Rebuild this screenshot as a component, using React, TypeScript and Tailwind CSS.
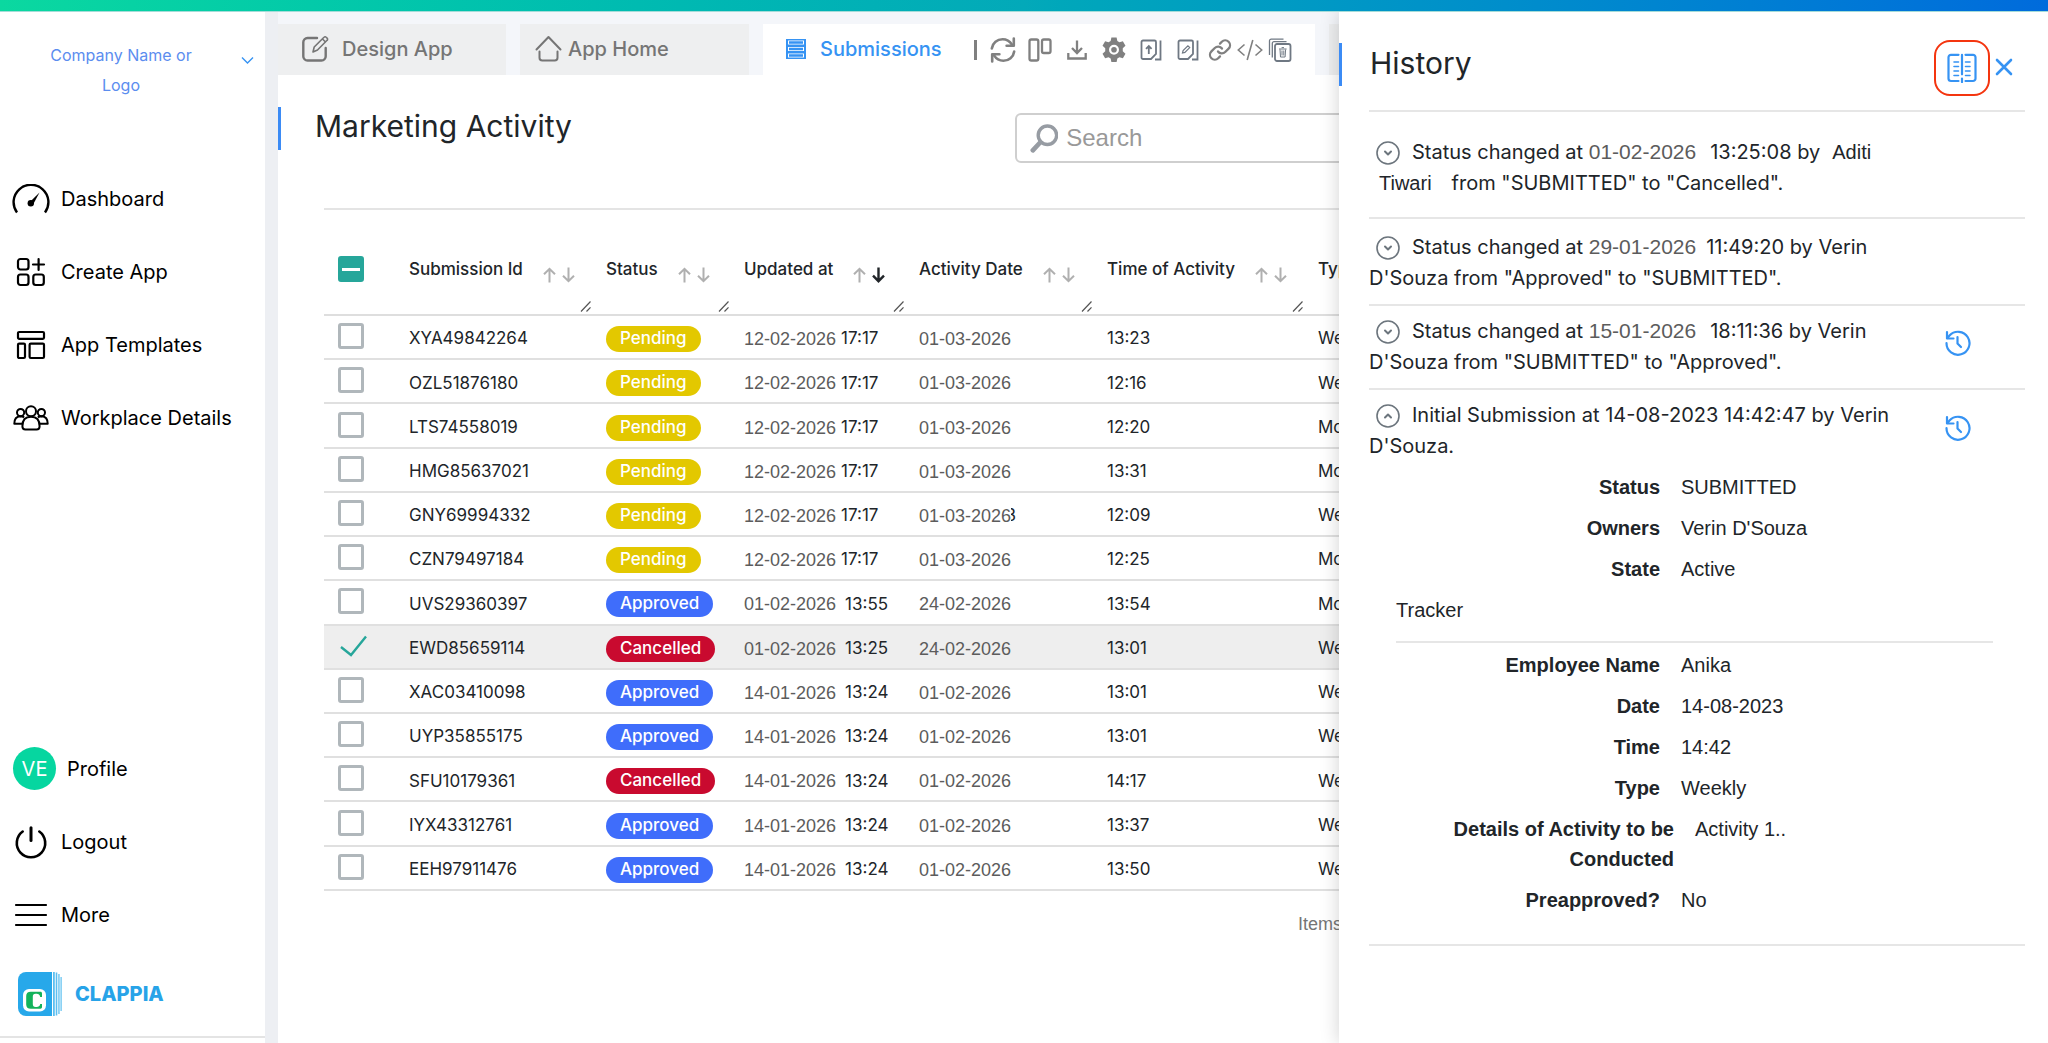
import React from 'react';

type Status = 'Pending' | 'Approved' | 'Cancelled';

interface Submission {
  id: string;
  status: Status;
  date: string;
  time: string;
  activityDate: string;
  activityTime: string;
  type: string;
  selected?: boolean;
  clipped?: string;
}

const submissions: Submission[] = [
  { id: 'XYA49842264', status: 'Pending', date: '12-02-2026', time: '17:17', activityDate: '01-03-2026', activityTime: '13:23', type: 'Weekly' },
  { id: 'OZL51876180', status: 'Pending', date: '12-02-2026', time: '17:17', activityDate: '01-03-2026', activityTime: '12:16', type: 'Weekly' },
  { id: 'LTS74558019', status: 'Pending', date: '12-02-2026', time: '17:17', activityDate: '01-03-2026', activityTime: '12:20', type: 'Monthly' },
  { id: 'HMG85637021', status: 'Pending', date: '12-02-2026', time: '17:17', activityDate: '01-03-2026', activityTime: '13:31', type: 'Monthly' },
  { id: 'GNY69994332', status: 'Pending', date: '12-02-2026', time: '17:17', activityDate: '01-03-2026', activityTime: '12:09', type: 'Weekly', clipped: '3' },
  { id: 'CZN79497184', status: 'Pending', date: '12-02-2026', time: '17:17', activityDate: '01-03-2026', activityTime: '12:25', type: 'Monthly' },
  { id: 'UVS29360397', status: 'Approved', date: '01-02-2026', time: '13:55', activityDate: '24-02-2026', activityTime: '13:54', type: 'Monthly' },
  { id: 'EWD85659114', status: 'Cancelled', date: '01-02-2026', time: '13:25', activityDate: '24-02-2026', activityTime: '13:01', type: 'Weekly', selected: true },
  { id: 'XAC03410098', status: 'Approved', date: '14-01-2026', time: '13:24', activityDate: '01-02-2026', activityTime: '13:01', type: 'Weekly' },
  { id: 'UYP35855175', status: 'Approved', date: '14-01-2026', time: '13:24', activityDate: '01-02-2026', activityTime: '13:01', type: 'Weekly' },
  { id: 'SFU10179361', status: 'Cancelled', date: '14-01-2026', time: '13:24', activityDate: '01-02-2026', activityTime: '14:17', type: 'Weekly' },
  { id: 'IYX43312761', status: 'Approved', date: '14-01-2026', time: '13:24', activityDate: '01-02-2026', activityTime: '13:37', type: 'Weekly' },
  { id: 'EEH97911476', status: 'Approved', date: '14-01-2026', time: '13:24', activityDate: '01-02-2026', activityTime: '13:50', type: 'Weekly' },
];

const badgeColors: Record<Status, string> = {
  Pending: 'bg-[#e3c800]',
  Approved: 'bg-[#3f6dfb]',
  Cancelled: 'bg-[#c90a2f]',
};

const columns = [
  { label: 'Submission Id', width: 'w-[197px]' },
  { label: 'Status', width: 'w-[138px]' },
  { label: 'Updated at', width: 'w-[175px]', sorted: true },
  { label: 'Activity Date', width: 'w-[188px]' },
  { label: 'Time of Activity', width: 'w-[211px]' },
  { label: 'Type', width: '' },
];

/* ---------- Sidebar ---------- */

const DashboardIcon = () => (
  <svg width="38" height="30" viewBox="0 0 38 30" fill="none">
    <path d="M5 28.5A17.4 17.4 0 1 1 33 28.5" stroke="#000" strokeWidth="2.4" />
    <path d="M27.5 8.5L20.8 21l-3.4-2.6z" fill="#000" />
    <circle cx="18.8" cy="19.3" r="3.2" fill="#000" />
  </svg>
);

const CreateIcon = () => (
  <svg width="30" height="30" viewBox="0 0 30 30" fill="none" stroke="#000" strokeWidth="2.2" strokeLinecap="round">
    <rect x="2" y="2" width="10.5" height="10.5" rx="2.4" />
    <rect x="2" y="17.5" width="10.5" height="10.5" rx="2.4" />
    <rect x="17.3" y="17.5" width="10.5" height="10.5" rx="2.4" />
    <path d="M22.6 2v11M17 7.5h11" />
  </svg>
);

const TemplatesIcon = () => (
  <svg width="30" height="30" viewBox="0 0 30 30" fill="none" stroke="#000" strokeWidth="2.2">
    <rect x="2" y="2" width="26" height="6.8" rx="1.2" />
    <rect x="2" y="13.6" width="7" height="14.4" rx="1.2" />
    <rect x="13.6" y="13.6" width="14.4" height="14.4" rx="1.2" />
  </svg>
);

const PeopleIcon = () => (
  <svg width="36" height="26" viewBox="0 0 36 26" fill="none" stroke="#000" strokeWidth="2" strokeLinejoin="round">
    <circle cx="18" cy="6.3" r="5" />
    <circle cx="7.6" cy="7.6" r="3.6" />
    <circle cx="28.4" cy="7.6" r="3.6" />
    <path d="M9.4 21.2c0-6 3.2-9.4 8.6-9.4s8.6 3.4 8.6 9.4c0 2-1 3.2-3 3.2H12.4c-2 0-3-1.2-3-3.2z" />
    <path d="M9.2 18.8H1.3c0-4.4 2-7.4 6-7.6 1.6 0 2.8.4 3.8 1.2M26.8 18.8h7.9c0-4.4-2-7.4-6-7.6-1.6 0-2.8.4-3.8 1.2" />
  </svg>
);

const PowerIcon = () => (
  <svg width="34" height="34" viewBox="0 0 34 34" fill="none" stroke="#000" strokeWidth="2.6" strokeLinecap="round">
    <path d="M17 2.8v12.6" strokeWidth="3" />
    <path d="M8.7 6.5a14.2 14.2 0 1 0 16.6 0" />
  </svg>
);

const MoreIcon = () => (
  <svg width="34" height="24" viewBox="0 0 34 24" fill="none" stroke="#000" strokeWidth="2.2" strokeLinecap="round">
    <path d="M2 2h30M2 12h30M2 22h30" />
  </svg>
);

const ClappiaLogo = () => (
  <svg width="44" height="44" viewBox="0 0 44 44">
    <path d="M8 0h26v44H8a8 8 0 0 1-8-8V8a8 8 0 0 1 8-8z" fill="#27a8ea" />
    <path d="M35 .1h1.8v43.8H35zM37.7.6h1.6v42.8h-1.6zM40.3 2h1.3v40h-1.3zM42.5 5h1.2v34h-1.2z" fill="#5cbff0" />
    <rect x="5" y="17" width="23" height="22.5" rx="6" fill="#fff" />
    <path
      d="M24 25v-3.6c0-1-.6-1.600-1.600-1.600h-9.600c-3 0-4.600 1.500-4.600 4.300v8.300c0 2.800 1.600 4.300 4.600 4.300h9.600c1 0 1.600-.6 1.600-1.600V32h-1.800c-.4 2.200-1.600 3-3.600 3h-1c-2 0-2.800-.9-2.800-3v-7.200c0-2.100.8-3 2.800-3h1c2 0 3.200.9 3.600 3.200z"
      fill="#13b35b"
    />
  </svg>
);

const NavItem: React.FC<{ icon: React.ReactNode; label: string }> = ({ icon, label }) => (
  <li>
    <a href="#" className="flex h-[73px] items-center gap-[11px] pl-3 text-xl text-black">
      <span className="flex w-[38px] justify-center">{icon}</span>
      {label}
    </a>
  </li>
);

const Sidebar = () => (
  <aside className="flex w-[265px] shrink-0 flex-col bg-white">
    <button className="flex items-start pt-7 text-left">
      <span className="ml-[42px] w-[158px] text-center text-base leading-[30px] text-[#5b8def]">Company Name or Logo</span>
      <svg className="mt-4 ml-[41px]" width="13" height="9" viewBox="0 0 13 9" fill="none" stroke="#3693f3" strokeWidth="1.4">
        <path d="M1 1.5l5.5 5.5L12 1.5" />
      </svg>
    </button>
    <nav className="mt-[62px]">
      <ul>
        <NavItem icon={<DashboardIcon />} label="Dashboard" />
        <NavItem icon={<CreateIcon />} label="Create App" />
        <NavItem icon={<TemplatesIcon />} label="App Templates" />
        <NavItem icon={<PeopleIcon />} label="Workplace Details" />
      </ul>
    </nav>
    <ul className="mt-auto">
      <li>
        <a href="#" className="flex h-[73px] items-center gap-[11px] pl-[13px] text-xl text-black">
          <span className="flex size-[43px] items-center justify-center rounded-full bg-[#06d6a0] text-white">VE</span>
          Profile
        </a>
      </li>
      <NavItem icon={<PowerIcon />} label="Logout" />
      <NavItem icon={<MoreIcon />} label="More" />
    </ul>
    <a href="#" className="flex h-[85px] items-center gap-[13px] pl-[18px] text-xl font-extrabold text-[#27a3e8]">
      <ClappiaLogo />
      CLAPPIA
    </a>
    <div className="h-[7px] border-t-2 border-[#e4e4e4]" />
  </aside>
);

/* ---------- Tabs and toolbar ---------- */

const ToolButton: React.FC<{ label: string; children: React.ReactNode }> = ({ label, children }) => (
  <button aria-label={label} className="flex h-7 w-6 items-center justify-center text-[#808080]">
    {children}
  </button>
);

const Toolbar = () => (
  <div className="flex items-center">
    <div className="mr-[14px] h-5 w-[3px] bg-[#808080]" />
    <div className="flex gap-[13px]">
      <ToolButton label="Refresh">
        <svg width="26" height="26" viewBox="0 0 26 26" fill="none" stroke="currentColor" strokeWidth="2.6" strokeLinejoin="round" strokeLinecap="round" className="shrink-0">
          <path d="M1.8 11.5C2.6 5.8 7.2 2.2 12.6 2.2c4 0 7.2 2 9.4 5.4M24.2 14.5c-.8 5.7-5.4 9.3-10.8 9.3-4 0-7.2-2-9.4-5.4" />
          <path d="M23.8 1.5v7.2h-7.2M2.2 24.5v-7.2h7.2" />
        </svg>
      </ToolButton>
      <ToolButton label="Columns">
        <svg width="24" height="24" viewBox="0 0 24 24" fill="none" stroke="currentColor" strokeWidth="2.3">
          <rect x="1.500" y="1.500" width="8.800" height="21" rx="1.800" />
          <rect x="14" y="1.500" width="8.500" height="13.500" rx="1.800" />
        </svg>
      </ToolButton>
      <ToolButton label="Download">
        <svg width="20" height="20" viewBox="0 0 20 20" fill="none" stroke="currentColor" strokeWidth="2.3">
          <path d="M10 .5v12M5 8l5 5 5-5M1.3 13v5.5h17.4V13" />
        </svg>
      </ToolButton>
      <ToolButton label="Settings">
        <svg width="26" height="26" viewBox="0 0 24 24" fill="currentColor" className="shrink-0">
          <path
            fillRule="evenodd"
            d="M9.600 .5h4.800l.7 3.300 1.900 1.100 3.200-1 2.400 4.200-2.500 2.300v2.800l2.500 2.300-2.400 4.200-3.200-1-1.900 1.100-.7 3.300H9.600l-.7-3.300L7 18.700l-3.200 1-2.400-4.200 2.500-2.300v-2.800L1.400 8.100l2.400-4.200 3.200 1 1.900-1.100zM12 7.200a4.600 4.600 0 1 0 0 9.200 4.600 4.600 0 0 0 0-9.200zm0 2a2.600 2.600 0 1 1 0 5.200 2.600 2.600 0 0 1 0-5.200z"
          />
        </svg>
      </ToolButton>
      <ToolButton label="Bulk upload">
        <svg width="22" height="22" viewBox="0 0 22 22" fill="none" stroke="#6f7883" strokeWidth="1.8">
          <path d="M3 1.5h11.500a1.500 1.500 0 0 1 1.500 1.500v12l-5 5H3A1.500 1.500 0 0 1 1.500 18.500V3A1.500 1.500 0 0 1 3 1.500z" />
          <path d="M20.500 1.500v19h-5.500M8.800 15V7.500M6 9.800l2.800-2.800 2.800 2.800" />
        </svg>
      </ToolButton>
      <ToolButton label="Bulk edit">
        <svg width="22" height="22" viewBox="0 0 22 22" fill="none" stroke="#6f7883" strokeWidth="1.8">
          <path d="M3 1.5h11.500a1.500 1.500 0 0 1 1.500 1.500v12l-5 5H3A1.500 1.500 0 0 1 1.500 18.500V3A1.500 1.500 0 0 1 3 1.500z" />
          <path d="M20.500 1.500v19h-5.500" />
          <path d="M5.500 14l.6-2.400 4.800-4.800 1.800 1.800-4.800 4.800z" strokeWidth="1.2" />
        </svg>
      </ToolButton>
    </div>
    <div className="ml-2 flex gap-[6px]">
      <ToolButton label="Copy link">
        <svg width="24" height="24" viewBox="0 0 24 24" fill="none" stroke="currentColor" strokeWidth="2.3" strokeLinecap="round">
          <path d="M10 13.500a4.800 4.800 0 0 0 7.200.5l3.400-3.400a4.800 4.800 0 0 0-6.800-6.800L12 5.600" />
          <path d="M14 10.500a4.800 4.800 0 0 0-7.200-.5l-3.400 3.400a4.800 4.800 0 0 0 6.800 6.800l1.800-1.800" />
        </svg>
      </ToolButton>
      <ToolButton label="Embed code">
        <svg width="26" height="22" viewBox="0 0 26 22" fill="none" stroke="currentColor" strokeWidth="1.6" className="shrink-0">
          <path d="M7.500 5.500L1.300 11l6.200 5.500M18.500 5.500l6.200 5.500-6.200 5.500M15.800 1l-5.600 20" />
        </svg>
      </ToolButton>
      <ToolButton label="Bulk delete">
        <svg width="24" height="24" viewBox="0 0 24 24" fill="none" stroke="#6f7883" strokeWidth="1.3">
          <rect x="7" y="6" width="15.500" height="17" rx="2" strokeWidth="1.800" />
          <path d="M4.300 19.500V5.300a1.700 1.700 0 0 1 1.700-1.700h12.500M1.500 17V2.800a1.700 1.700 0 0 1 1.700-1.700h12.300" />
          <path d="M11 11h7.600M12 11.500l.5 7.500h4.600l.5-7.500M13.600 9.600h2.400M14 12.500v5M15.800 12.500v5" strokeWidth="1" />
        </svg>
      </ToolButton>
    </div>
  </div>
);

const Tabs = () => (
  <div className="flex h-[51px] gap-[14px] overflow-hidden text-xl font-medium text-[#757575]">
    <a href="#" className="flex w-[228px] shrink-0 items-center gap-[13px] bg-[#eeeff0] pb-[2px] pl-6">
      <svg width="27" height="27" viewBox="0 0 27 27" fill="none" stroke="currentColor" strokeWidth="2.4" strokeLinecap="round">
        <path d="M15 3H5.500A4.200 4.200 0 0 0 1.300 7.200v14A4.200 4.200 0 0 0 5.500 25.500h14a4.200 4.200 0 0 0 4.200-4.300V13" />
        <path d="M11 17l1.200-5L22 2.200a1.500 1.500 0 0 1 2.200 0l.9.900a1.500 1.500 0 0 1 0 2.200L15.500 15zM20.500 4l3 3" strokeWidth="1.600" strokeLinejoin="round" />
      </svg>
      Design App
    </a>
    <a href="#" className="flex w-[229px] shrink-0 items-center gap-[6px] bg-[#eeeff0] pb-[2px] pl-[15px]">
      <svg width="27" height="27" viewBox="0 0 27 27" fill="none" stroke="currentColor" strokeWidth="2" strokeLinecap="round" strokeLinejoin="round">
        <path d="M1.500 14.500L13.500 2l12 12.500M4.500 16.500v6.300a2.800 2.800 0 0 0 2.800 2.800h12.400a2.800 2.800 0 0 0 2.800-2.800v-6.300" />
      </svg>
      App Home
    </a>
    <div className="flex w-[552px] shrink-0 items-center bg-white pl-[23px]">
      <a href="#" className="flex items-center gap-[14px] pb-[2px] text-[#3693f3]">
        <svg width="20" height="20" viewBox="0 0 20 20" fill="none" stroke="currentColor">
          <rect width="20" height="20" fill="currentColor" stroke="none" />
          <path d="M2 3.500h16M2 10h16M2 16.500h16" stroke="#fff" strokeWidth="4" />
          <path d="M3 3.500h14M3 10h14M3 16.500h14" strokeWidth="2.400" />
        </svg>
        <span className="w-[154px]">Submissions</span>
      </a>
      <Toolbar />
    </div>
    <div className="flex-1 bg-[#eeeff0]" />
  </div>
);

/* ---------- Submissions table ---------- */

const SortArrows: React.FC<{ sorted?: boolean }> = ({ sorted }) => (
  <button aria-label="Sort" className="mt-[10px] flex gap-[6px]">
    <svg width="13" height="16" viewBox="0 0 13 16" fill="none" stroke="#b0b0b0" strokeWidth="2">
      <path d="M6.500 15.500V2M1 7.300l5.500-5.500L12 7.300" />
    </svg>
    <svg width="13" height="16" viewBox="0 0 13 16" fill="none" stroke={sorted ? '#212529' : '#b0b0b0'} strokeWidth={sorted ? 2.4 : 2}>
      <path d="M6.500.5V14M1 8.700l5.500 5.500L12 8.700" />
    </svg>
  </button>
);

const RowCheckbox: React.FC<{ row: Submission }> = ({ row }) => (
  <label className="relative ml-[14px] flex size-[26px] items-center">
    <input
      type="checkbox"
      aria-label={`Select ${row.id}`}
      defaultChecked={row.selected}
      className="peer size-[26px] appearance-none rounded-[3px] border-[3px] border-[#b0b7bb] checked:border-transparent"
    />
    <svg
      className="pointer-events-none absolute left-0 hidden peer-checked:block"
      width="30"
      height="22"
      viewBox="0 0 30 22"
      fill="none"
      stroke="#26a69a"
      strokeWidth="2.4"
    >
      <path d="M3 12l10 8L28 1.500" />
    </svg>
  </label>
);

const SubmissionsTable = () => (
  <table className="h-[681px] w-full table-fixed border-collapse text-left text-[17px] text-[#212529]">
    <thead>
      <tr className="h-[105px] border-b-2 border-[#dedede]">
        <th className="w-[71px] align-top">
          <label className="relative mt-[46px] ml-[14px] flex size-[26px] items-center justify-center">
            <input
              type="checkbox"
              aria-label="Select all"
              defaultChecked
              className="size-[26px] appearance-none rounded-[3px] border-[3px] border-[#b0b7bb] checked:border-[#26a69a] checked:bg-[#26a69a]"
            />
            <span className="pointer-events-none absolute h-[3px] w-[18px] bg-white" />
          </label>
        </th>
        {columns.map((col) => (
          <th key={col.label} className={`relative pl-[14px] align-top font-medium whitespace-nowrap ${col.width}`}>
            <div className="mt-[47px] flex gap-5">
              {col.label}
              <SortArrows sorted={col.sorted} />
            </div>
            <svg className="absolute right-0 bottom-[2px]" width="12" height="11" viewBox="0 0 12 11" stroke="#555" strokeWidth="1.2">
              <path d="M1 10.500L10.500.5M6.500 10.500l4-4.200" />
            </svg>
          </th>
        ))}
      </tr>
    </thead>
    <tbody>
      {submissions.map((row) => (
        <tr key={row.id} className={`h-[44px] border-b-2 border-[#e0e0e0] whitespace-nowrap ${row.selected ? 'bg-[#eeeeee]' : ''}`}>
          <td className="pb-[2px]">
            <RowCheckbox row={row} />
          </td>
          <td className="pt-1 pl-[14px]">{row.id}</td>
          <td className="pt-1 pl-[14px]">
            <span className={`block h-[26px] w-fit rounded-full px-[14px] leading-[25px] font-medium text-white ${badgeColors[row.status]}`}>
              {row.status}
            </span>
          </td>
          <td className="pt-1 pl-[14px]">
            <div className={`flex items-center ${row.status === 'Pending' ? 'gap-[5px]' : 'gap-[9px]'}`}>
              <span className="font-['Liberation_Sans',sans-serif] text-lg text-[#5c5c5c]">{row.date}</span>
              <span>{row.time}</span>
            </div>
          </td>
          <td className="pt-1 pl-[14px]">
            <div className="flex items-center">
              <span className="font-['Liberation_Sans',sans-serif] text-lg text-[#5c5c5c]">{row.activityDate}</span>
              {row.clipped && <span className="flex w-[5px] justify-end overflow-hidden">{row.clipped}</span>}
            </div>
          </td>
          <td className="pt-1 pl-[14px]">{row.activityTime}</td>
          <td className="pt-1 pl-[14px]">{row.type}</td>
        </tr>
      ))}
    </tbody>
  </table>
);

/* ---------- History drawer ---------- */

const Toggle: React.FC<{ open?: boolean }> = ({ open }) => (
  <button aria-label={open ? 'Collapse' : 'Expand'} className="mr-3 ml-[7px] inline-flex align-[-6px]">
    <svg width="24" height="24" viewBox="0 0 24 24" fill="none" stroke="#6c757d" strokeWidth="1.6" strokeLinecap="round" strokeLinejoin="round">
      <circle cx="12" cy="12" r="11" />
      <path d={open ? 'M9 13.500L12 10.500l3 3' : 'M9 10.500L12 13.500l3-3'} strokeWidth="2" />
    </svg>
  </button>
);

const RestoreButton = () => (
  <button aria-label="Restore" className="mr-[54px] mb-[7px] self-center text-[#3693f3]">
    <svg width="26" height="26" viewBox="0 0 26 26" fill="none" stroke="currentColor" strokeWidth="2.2" strokeLinecap="round" strokeLinejoin="round">
      <path d="M1.500 13.200A11.500 11.500 0 1 0 4.500 5.500L2.500 8" />
      <path d="M2 2v6.500h6.500M12.500 7v6.500l3.500 3.500" />
    </svg>
  </button>
);

const DateText: React.FC<{ children: React.ReactNode }> = ({ children }) => (
  <span className="font-['Liberation_Sans',sans-serif] text-[21px] text-[#5c5c5c]">{children}</span>
);

const Detail: React.FC<{ label: string; value: string }> = ({ label, value }) => (
  <div className="mb-[11px] grid grid-cols-[291px_1fr] gap-[21px]">
    <dt className="text-right font-bold">{label}</dt>
    <dd>{value}</dd>
  </div>
);

const HistoryDrawer = () => (
  <section className="absolute inset-y-0 right-0 w-[709px] bg-white text-[#212529] shadow-[0_0_18px_rgba(0,0,0,0.18)]">
    <header className="flex h-[98px] items-start pr-[35px]">
      <div className="mt-[31px] h-[43px] w-[3px] bg-[#3b8bf5]" />
      <h2 className="mt-7 ml-7 flex-1 text-[30px] leading-[46px]">History</h2>
      <button aria-label="Compare versions" className="mt-7 flex size-[56px] items-center justify-center rounded-[16px] border-2 border-[#f4350f] text-[#3693f3]">
        <svg width="30" height="30" viewBox="0 0 30 30" fill="none" stroke="currentColor" strokeWidth="2.2" strokeLinecap="round" strokeLinejoin="round">
          <path d="M11.500 1.800H4A2.500 2.500 0 0 0 1.500 4.300v21.200A2.500 2.500 0 0 0 4 28h7.500M18.500 1.800H26a2.500 2.500 0 0 1 2.500 2.500v21.200A2.500 2.500 0 0 1 26 28h-7.500" />
          <path d="M15 1.800v19.500M15 25.500v3.500" />
          <path d="M7 9h4.500M7 13.500h4.500M7 18h4.500M7 22.500h4.500M18.500 9H23M18.500 13.500H23M18.500 18H23M18.500 22.500H23" strokeWidth="1.600" />
        </svg>
      </button>
      <button aria-label="Close" className="mt-[46px] ml-[5px] text-[#3693f3]">
        <svg width="18" height="18" viewBox="0 0 18 18" fill="none" stroke="currentColor" strokeWidth="2.6" strokeLinecap="round">
          <path d="M2 2l14 14M16 2L2 16" />
        </svg>
      </button>
    </header>
    <div className="mr-[23px] ml-[30px] border-y-2 border-[#e6e6e6] text-xl leading-[31px]">
      <div className="flex justify-between border-b-2 border-[#e6e6e6] pt-6 pb-[18px]">
        <p>
          <Toggle />
          Status changed at <DateText>01-02-2026</DateText>
          <span className="ml-[14px]">13:25:08 by</span>
          <span className="ml-3 font-['Liberation_Sans',sans-serif]">Aditi</span>
          <br />
          <span className="mr-5 ml-[10px] font-['Liberation_Sans',sans-serif]">Tiwari</span>
          from "SUBMITTED" to "Cancelled".
        </p>
      </div>
      <div className="flex justify-between border-b-2 border-[#e6e6e6] pt-3 pb-[10px]">
        <p>
          <Toggle />
          Status changed at <DateText>29-01-2026</DateText>
          <span className="ml-[10px]">11:49:20 by Verin</span>
          <br />
          D'Souza from "Approved" to "SUBMITTED".
        </p>
      </div>
      <div className="flex justify-between border-b-2 border-[#e6e6e6] pt-[9px] pb-[10px]">
        <p>
          <Toggle />
          Status changed at <DateText>15-01-2026</DateText>
          <span className="ml-[14px]">18:11:36 by Verin</span>
          <br />
          D'Souza from "SUBMITTED" to "Approved".
        </p>
        <RestoreButton />
      </div>
      <div className="flex justify-between pt-[10px]">
        <p>
          <Toggle open />
          Initial Submission at 14-08-2023 14:42:47 by Verin
          <br />
          D'Souza.
        </p>
        <RestoreButton />
      </div>
      <div className="mt-[10px] pb-[18px] font-['Liberation_Sans',sans-serif] leading-[30px]">
        <dl>
          <Detail label="Status" value="SUBMITTED" />
          <Detail label="Owners" value="Verin D'Souza" />
          <Detail label="State" value="Active" />
        </dl>
        <h3 className="mr-8 mb-[7px] ml-[27px] border-b-2 border-[#e6e6e6] pb-4">Tracker</h3>
        <dl>
          <Detail label="Employee Name" value="Anika" />
          <Detail label="Date" value="14-08-2023" />
          <Detail label="Time" value="14:42" />
          <Detail label="Type" value="Weekly" />
          <div className="mb-[11px] grid grid-cols-[305px_1fr] gap-[21px]">
            <dt className="pl-20 text-right font-bold">Details of Activity to be Conducted</dt>
            <dd>Activity 1..</dd>
          </div>
          <Detail label="Preapproved?" value="No" />
        </dl>
      </div>
    </div>
  </section>
);

export default function App() {
  return (
    <div className="flex min-h-screen flex-col font-[Inter,sans-serif]">
      <div className="h-3 border-b border-[#a5dcd8] bg-linear-to-r from-[#0bd8a0] via-[#03a9b9] to-[#006bdc]" />
      <div className="relative flex flex-1 overflow-hidden">
        <Sidebar />
        <div className="w-[13px] shrink-0 bg-[#edeff3]" />
        <main className="min-w-0 flex-1 bg-white">
          <div className="bg-[#f4f6fa] pt-3">
            <Tabs />
          </div>
          <div className="mt-8 flex items-start">
            <div className="h-[43px] w-[3px] bg-[#3b8bf5]" />
            <h1 className="ml-[34px] w-[700px] text-[30px] leading-[38px] text-[#212529]">Marketing Activity</h1>
            <label className="mt-[6px] flex h-[50px] w-[640px] items-center rounded-[6px] border-2 border-[#cfcfcf] pl-[13px]">
              <svg width="30" height="31" viewBox="0 0 30 31" fill="none" stroke="#979ca3" strokeLinecap="round">
                <circle cx="18.500" cy="12" r="9.800" strokeWidth="3.600" />
                <path d="M10.500 20L3 28" strokeWidth="5" />
              </svg>
              <input
                type="text"
                aria-label="Search submissions"
                placeholder="Search"
                className="ml-2 w-full font-['Liberation_Sans',sans-serif] text-2xl outline-none placeholder:text-[#999999]"
              />
            </label>
          </div>
          <div className="mt-[45px] mr-5 ml-[46px] border-t-2 border-[#e4e4e4]">
            <SubmissionsTable />
            <div className="mt-[19px] pl-[974px] font-['Liberation_Sans',sans-serif] text-lg text-[#757575]">Items per page</div>
          </div>
        </main>
        <HistoryDrawer />
      </div>
    </div>
  );
}
